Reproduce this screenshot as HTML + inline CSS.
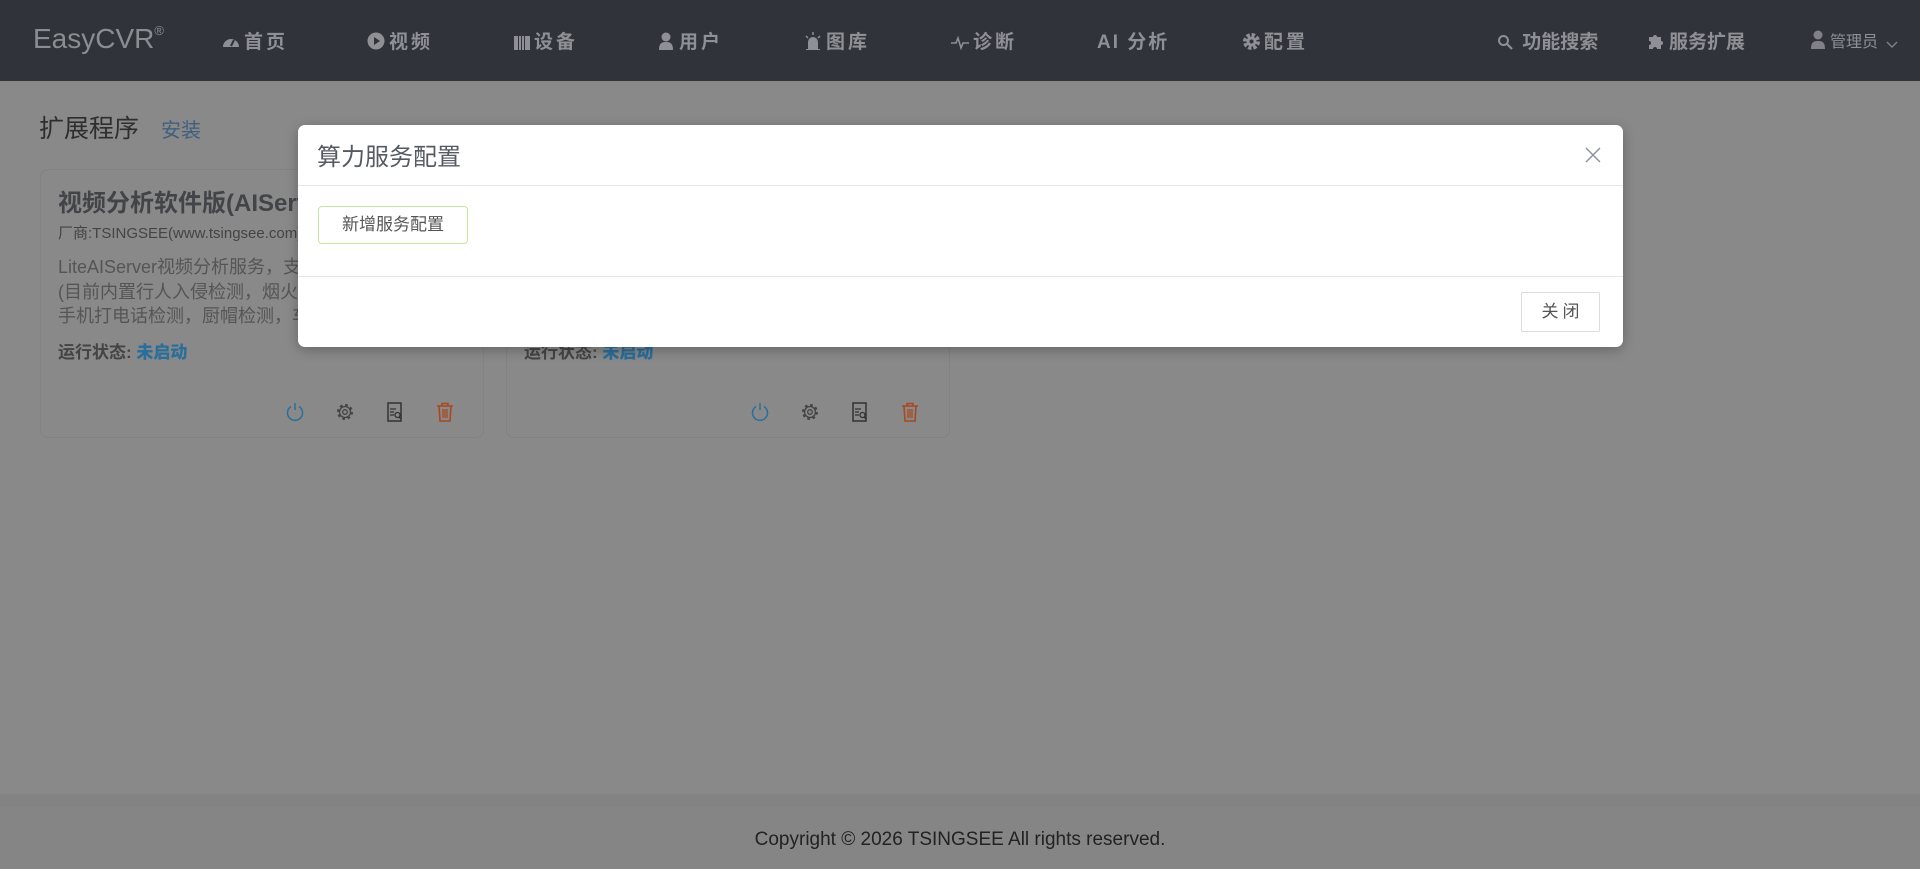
<!DOCTYPE html>
<html><head><meta charset="utf-8"><style>
*{margin:0;padding:0;box-sizing:border-box}
body{width:1920px;height:869px;overflow:hidden;background:#898989;font-family:"Liberation Sans","Noto Sans CJK SC",sans-serif;position:relative}
.nav{position:absolute;left:0;top:0;width:1920px;height:81px;background:#31333b;color:#8e9095}
.nav .it{position:absolute;top:30px;font-size:19px;font-weight:bold;letter-spacing:3px;line-height:26px;white-space:nowrap}
.nav svg{vertical-align:-2px;margin-right:4px}
.logo{position:absolute;left:33px;top:23px;font-size:28px;color:#8b8d91;letter-spacing:0}
.logo sup{font-size:13px;vertical-align:13px}
.h{position:absolute;left:39px;top:109px;font-size:25px;color:#2e2e2e}
.h span{font-size:20px;color:#3f5f7f;margin-left:22px}
.card{position:absolute;top:169px;width:444px;height:269px;border:1px solid #828282;border-radius:8px}
.t{position:absolute;left:17px;top:13px;font-size:24px;font-weight:bold;color:#424448;white-space:nowrap}
.v{position:absolute;left:17px;top:52px;font-size:15px;color:#444;white-space:nowrap}
.d{position:absolute;left:17px;top:85px;font-size:18px;color:#555;line-height:24.5px;white-space:nowrap}
.s{position:absolute;left:17px;top:168px;font-size:17px;font-weight:bold;color:#444}
.s b{color:#2a6e9a}
.ic{position:absolute;top:232px}
.foot{position:absolute;left:0;top:794px;width:1920px;height:75px;background:#858585;border-top:13px solid #838383}
.foot div{position:absolute;left:0;right:0;top:22px;text-align:center;font-size:19px;color:#222}
.modal{position:absolute;left:298px;top:125px;width:1325px;height:222px;background:#fff;border-radius:7px;box-shadow:0 3px 12px rgba(0,0,0,.25)}
.mt{position:absolute;left:19px;top:12px;font-size:24px;color:#555a63}
.l1{position:absolute;left:0;right:0;top:60px;border-top:1px solid #e6e6e6}
.l2{position:absolute;left:0;right:0;top:151px;border-top:1px solid #e6e6e6}
.nb{position:absolute;left:20px;top:81px;width:150px;height:38px;border:1px solid #c2e7a0;border-radius:4px;font-size:17px;color:#555;text-align:center;line-height:36px}
.cb{position:absolute;left:1223px;top:167px;width:79px;height:40px;border:1px solid #dcdcdc;border-radius:2px;font-size:17px;color:#555;text-align:center;line-height:38px;letter-spacing:4px;padding-left:4px}
</style></head><body>
<div class="nav">
<div class="logo">EasyCVR<sup>®</sup></div>
<div class="it" style="left:222px"><svg width="18" height="16" viewBox="0 0 18 16"><path d="M1 13A8 8 0 1 1 17 13Z" fill="#8e9095"/><path d="M9 12L12 6" stroke="#31333b" stroke-width="2"/></svg>首页</div>
<div class="it" style="left:367px"><svg width="18" height="18" viewBox="0 0 18 18"><circle cx="9" cy="9" r="8.5" fill="#8e9095"/><path d="M7 5L13 9L7 13Z" fill="#31333b"/></svg>视频</div>
<div class="it" style="left:514px"><svg width="16" height="14" viewBox="0 0 16 14"><path d="M0 0h4v14H0zM5 0h2v14H5zM8 0h2v14H8zM11 0h5v14h-5z" fill="#8e9095"/></svg>设备</div>
<div class="it" style="left:659px"><svg width="16" height="18" viewBox="0 0 16 18"><circle cx="7" cy="5" r="4.5" fill="#8e9095"/><path d="M0 18C0 11 3 10 7 10S14 11 14 18Z" fill="#8e9095"/></svg>用户</div>
<div class="it" style="left:804px"><svg width="18" height="18" viewBox="0 0 18 18"><path d="M4 17V10a5 5 0 0 1 10 0v7Z M2 17h14v1H2z" fill="#8e9095"/><path d="M9 0v3M2 4l2 2M16 4l-2 2" stroke="#8e9095" stroke-width="1.5"/></svg>图库</div>
<div class="it" style="left:951px"><svg width="18" height="16" viewBox="0 0 18 16"><path d="M0 9h5l2-5 3 10 2-5h6" fill="none" stroke="#8e9095" stroke-width="1.6"/></svg>诊断</div>
<div class="it" style="left:1097px;letter-spacing:2px">AI 分析</div>
<div class="it" style="left:1243px"><svg width="17" height="17" viewBox="0 0 17 17"><circle cx="8.5" cy="8.5" r="6" fill="none" stroke="#8e9095" stroke-width="5" stroke-dasharray="3 1.7"/><circle cx="8.5" cy="8.5" r="5" fill="#8e9095"/><circle cx="8.5" cy="8.5" r="2" fill="#31333b"/></svg>配置</div>
<div class="it" style="left:1497px;letter-spacing:0"><svg width="16" height="16" viewBox="0 0 16 16"><circle cx="6.5" cy="6.5" r="4.5" fill="none" stroke="#8e9095" stroke-width="2"/><path d="M10 10l5 5" stroke="#8e9095" stroke-width="2.2"/></svg> 功能搜索</div>
<div class="it" style="left:1647px;letter-spacing:0"><svg width="18" height="18" viewBox="0 0 18 18"><path d="M2 5h4a2 2 0 1 1 4 0h4v4a2 2 0 1 1 0 4v4H10a2 2 0 1 0-4 0H2v-4a2 2 0 1 0 0-4Z" fill="#8e9095"/></svg>服务扩展</div>
<div class="it" style="left:1810px;font-weight:normal;font-size:16px;letter-spacing:0"><svg width="16" height="19" viewBox="0 0 16 19"><circle cx="8" cy="5" r="4.5" fill="#7f8186"/><path d="M1 19C1 12 4 11 8 11S15 12 15 19Z" fill="#7f8186"/></svg>管理员 <svg width="12" height="8" viewBox="0 0 12 8" style="margin-left:4px"><path d="M1 1l5 5 5-5" fill="none" stroke="#7f8186" stroke-width="1.4"/></svg></div>
</div>
<div class="h">扩展程序<span>安装</span></div>
<div class="card" style="left:40px">
<div class="t">视频分析软件版(AIServer)</div>
<div class="v">厂商:TSINGSEE(www.tsingsee.com)</div>
<div class="d">LiteAIServer视频分析服务，支持<br>(目前内置行人入侵检测，烟火检测<br>手机打电话检测，厨帽检测，车辆</div>
<div class="s">运行状态: <b>未启动</b></div>
<svg class="ic" style="left:244px" width="20" height="20" viewBox="0 0 20 20"><path d="M6 4.5A7.5 7.5 0 1 0 14 4.5" fill="none" stroke="#2a6e9a" stroke-width="1.5"/><path d="M10 1v7" stroke="#2a6e9a" stroke-width="1.5"/></svg>
<svg class="ic" style="left:294px" width="20" height="20" viewBox="0 0 20 20"><circle cx="10" cy="10" r="6.5" fill="none" stroke="#444" stroke-width="3" stroke-dasharray="2.5 2.6"/><circle cx="10" cy="10" r="5.5" fill="none" stroke="#444" stroke-width="1.3"/><circle cx="10" cy="10" r="2.3" fill="none" stroke="#444" stroke-width="1.3"/></svg>
<svg class="ic" style="left:344px" width="20" height="20" viewBox="0 0 20 20"><path d="M3 1h13v18H3z" fill="none" stroke="#333" stroke-width="1.5"/><path d="M5 7h6M5 10h4M5 13h4" stroke="#333" stroke-width="1.3"/><circle cx="12.5" cy="13" r="2.5" fill="none" stroke="#333" stroke-width="1.3"/><path d="M14 15l2 2" stroke="#333" stroke-width="1.3"/></svg>
<svg class="ic" style="left:394px" width="20" height="20" viewBox="0 0 20 20"><path d="M2 4h16M7 4V1.5h6V4M4 4l1 15h10l1-15" fill="none" stroke="#a9471f" stroke-width="1.6"/><path d="M8 7v9M10 7v9M12 7v9" stroke="#a9471f" stroke-width="1.2"/></svg>
</div>
<div class="card" style="left:506px">
<div class="s">运行状态: <b>未启动</b></div>
<svg class="ic" style="left:243px" width="20" height="20" viewBox="0 0 20 20"><path d="M6 4.5A7.5 7.5 0 1 0 14 4.5" fill="none" stroke="#2a6e9a" stroke-width="1.5"/><path d="M10 1v7" stroke="#2a6e9a" stroke-width="1.5"/></svg>
<svg class="ic" style="left:293px" width="20" height="20" viewBox="0 0 20 20"><circle cx="10" cy="10" r="6.5" fill="none" stroke="#444" stroke-width="3" stroke-dasharray="2.5 2.6"/><circle cx="10" cy="10" r="5.5" fill="none" stroke="#444" stroke-width="1.3"/><circle cx="10" cy="10" r="2.3" fill="none" stroke="#444" stroke-width="1.3"/></svg>
<svg class="ic" style="left:343px" width="20" height="20" viewBox="0 0 20 20"><path d="M3 1h13v18H3z" fill="none" stroke="#333" stroke-width="1.5"/><path d="M5 7h6M5 10h4M5 13h4" stroke="#333" stroke-width="1.3"/><circle cx="12.5" cy="13" r="2.5" fill="none" stroke="#333" stroke-width="1.3"/><path d="M14 15l2 2" stroke="#333" stroke-width="1.3"/></svg>
<svg class="ic" style="left:393px" width="20" height="20" viewBox="0 0 20 20"><path d="M2 4h16M7 4V1.5h6V4M4 4l1 15h10l1-15" fill="none" stroke="#a9471f" stroke-width="1.6"/><path d="M8 7v9M10 7v9M12 7v9" stroke="#a9471f" stroke-width="1.2"/></svg>
</div>
<div class="foot"><div>Copyright © 2026 TSINGSEE All rights reserved.</div></div>
<div class="modal">
<div class="mt">算力服务配置</div>
<svg style="position:absolute;left:1287px;top:22px" width="16" height="16" viewBox="0 0 16 16"><path d="M1 1l14 14M15 1L1 15" stroke="#8a8f99" stroke-width="1.4"/></svg>
<div class="l1"></div>
<div class="nb">新增服务配置</div>
<div class="l2"></div>
<div class="cb">关闭</div>
</div>
</body></html>
